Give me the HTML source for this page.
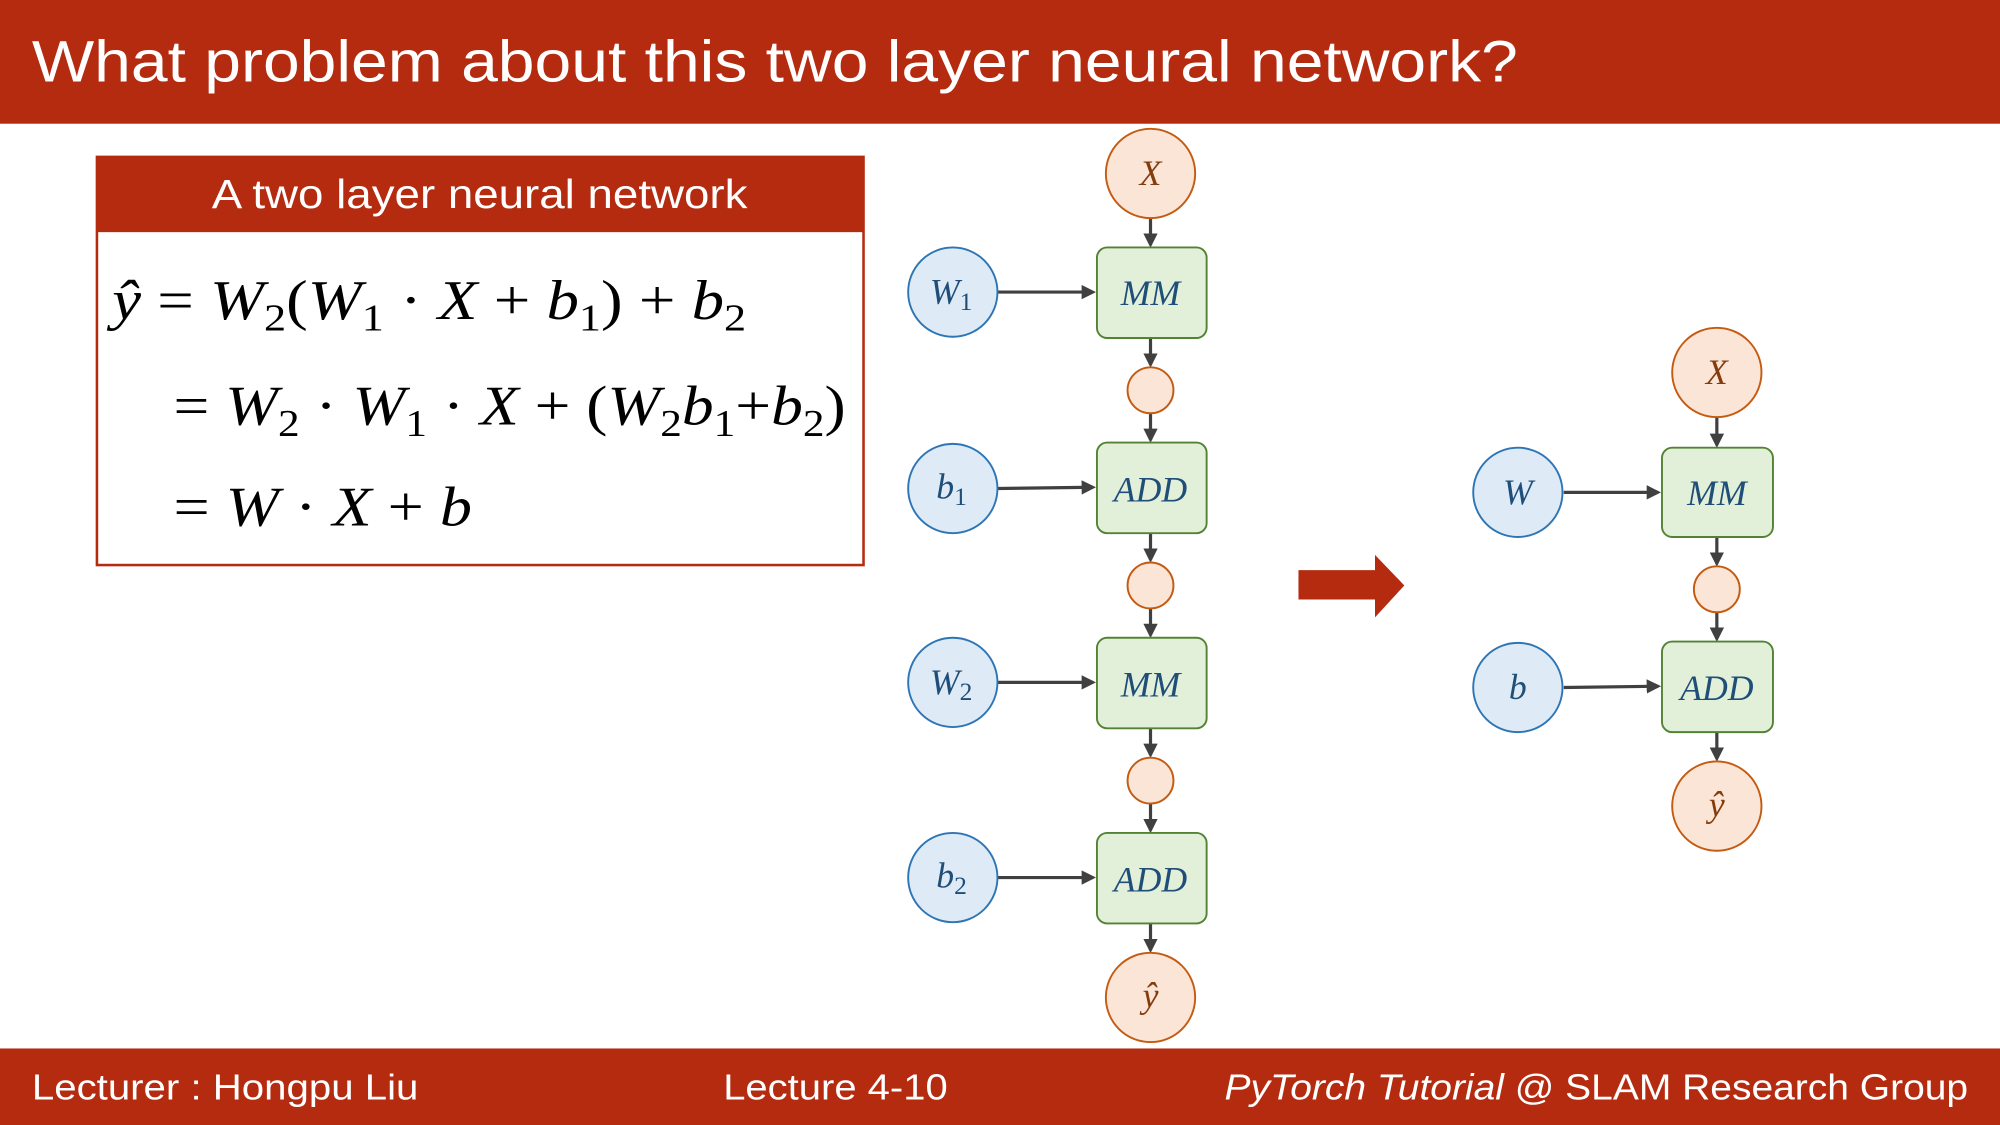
<!DOCTYPE html>
<html><head><meta charset="utf-8"><style>
html,body{margin:0;padding:0;background:#fff;}
svg{display:block;}
.s{font-family:"Liberation Sans",sans-serif;}
.m{font-family:"Liberation Serif",serif;}
.i{font-style:italic;}
.n{font-family:"Liberation Serif",serif;font-style:italic;fill:#1F4E79;font-size:28px;}
.o{fill:#FBE5D6;stroke:#C55A11;stroke-width:1.5;}
.b{fill:#DEEBF7;stroke:#2E75B6;stroke-width:1.5;}
.g{fill:#E2F0D9;stroke:#548235;stroke-width:1.5;}
.ln{stroke:#404040;stroke-width:2.5;}
</style></head><body>
<svg width="2000" height="1125" viewBox="0 0 1568 882" xmlns="http://www.w3.org/2000/svg">
<defs><marker id="ar" markerWidth="4.5" markerHeight="4.5" refX="3.6" refY="2.25" orient="auto" markerUnits="strokeWidth"><path d="M0,0 L4.5,2.25 L0,4.5 z" fill="#404040"/></marker></defs>
<rect x="0" y="0" width="1568" height="97" fill="#B52B10"/>
<text class="s" x="25" y="64" font-size="46" fill="#fff" textLength="1165" lengthAdjust="spacingAndGlyphs">What problem about this two layer neural network?</text>
<rect x="0" y="822" width="1568" height="60" fill="#B52B10"/>
<g class="s" font-size="28" fill="#fff">
<text x="25" y="862" textLength="303" lengthAdjust="spacingAndGlyphs">Lecturer : Hongpu Liu</text>
<text x="567" y="862" textLength="176" lengthAdjust="spacingAndGlyphs">Lecture 4-10</text>
<text x="960" y="862" textLength="583" lengthAdjust="spacingAndGlyphs"><tspan font-style="italic">PyTorch Tutorial</tspan> @ SLAM Research Group</text>
</g>
<rect x="76" y="123" width="601" height="320" fill="#fff" stroke="#B52B10" stroke-width="2"/>
<rect x="76" y="123" width="601" height="59" fill="#B52B10"/>
<text class="s" x="376" y="163" font-size="32" fill="#fff" text-anchor="middle" textLength="420" lengthAdjust="spacingAndGlyphs">A two layer neural network</text>
<g class="m" font-size="44" fill="#000">
<text x="88" y="250" textLength="497" lengthAdjust="spacingAndGlyphs"><tspan class="i">ŷ</tspan> = <tspan class="i">W</tspan><tspan dy="9" font-size="30">2</tspan><tspan dy="-9">(</tspan><tspan class="i">W</tspan><tspan dy="9" font-size="30">1</tspan><tspan dy="-9"> · </tspan><tspan class="i">X</tspan> + <tspan class="i">b</tspan><tspan dy="9" font-size="30">1</tspan><tspan dy="-9">) + </tspan><tspan class="i">b</tspan><tspan dy="9" font-size="30">2</tspan></text>
<text x="136" y="333" textLength="527" lengthAdjust="spacingAndGlyphs">= <tspan class="i">W</tspan><tspan dy="9" font-size="30">2</tspan><tspan dy="-9"> · </tspan><tspan class="i">W</tspan><tspan dy="9" font-size="30">1</tspan><tspan dy="-9"> · </tspan><tspan class="i">X</tspan> + (<tspan class="i">W</tspan><tspan dy="9" font-size="30">2</tspan><tspan dy="-9" class="i">b</tspan><tspan dy="9" font-size="30">1</tspan><tspan dy="-9">+</tspan><tspan class="i">b</tspan><tspan dy="9" font-size="30">2</tspan><tspan dy="-9">)</tspan></text>
<text x="136" y="412" textLength="234" lengthAdjust="spacingAndGlyphs">= <tspan class="i">W</tspan> · <tspan class="i">X</tspan> + <tspan class="i">b</tspan></text>
</g>
<g>
<line class="ln" x1="902" y1="171" x2="902" y2="192" marker-end="url(#ar)"/>
<line class="ln" x1="902" y1="265" x2="902" y2="286" marker-end="url(#ar)"/>
<line class="ln" x1="902" y1="324" x2="902" y2="345" marker-end="url(#ar)"/>
<line class="ln" x1="902" y1="418" x2="902" y2="439" marker-end="url(#ar)"/>
<line class="ln" x1="902" y1="477" x2="902" y2="498" marker-end="url(#ar)"/>
<line class="ln" x1="902" y1="571" x2="902" y2="592" marker-end="url(#ar)"/>
<line class="ln" x1="902" y1="630" x2="902" y2="651" marker-end="url(#ar)"/>
<line class="ln" x1="902" y1="724" x2="902" y2="745" marker-end="url(#ar)"/>
<line class="ln" x1="782" y1="229" x2="857" y2="229" marker-end="url(#ar)"/>
<line class="ln" x1="782" y1="383" x2="857" y2="382" marker-end="url(#ar)"/>
<line class="ln" x1="782" y1="535" x2="857" y2="535" marker-end="url(#ar)"/>
<line class="ln" x1="782" y1="688" x2="857" y2="688" marker-end="url(#ar)"/>
<circle class="o" cx="902" cy="136" r="35"/>
<rect class="g" x="860" y="194" width="86" height="71" rx="8"/>
<circle class="o" cx="902" cy="306" r="18"/>
<rect class="g" x="860" y="347" width="86" height="71" rx="8"/>
<circle class="o" cx="902" cy="459" r="18"/>
<rect class="g" x="860" y="500" width="86" height="71" rx="8"/>
<circle class="o" cx="902" cy="612" r="18"/>
<rect class="g" x="860" y="653" width="86" height="71" rx="8"/>
<circle class="o" cx="902" cy="782" r="35"/>
<circle class="b" cx="747" cy="229" r="35"/>
<circle class="b" cx="747" cy="383" r="35"/>
<circle class="b" cx="747" cy="535" r="35"/>
<circle class="b" cx="747" cy="688" r="35"/>
<text class="n" x="902" y="145" text-anchor="middle" style="fill:#843C0C">X</text>
<text class="n" x="902" y="239" text-anchor="middle">MM</text>
<text class="n" x="902" y="393" text-anchor="middle">ADD</text>
<text class="n" x="902" y="546" text-anchor="middle">MM</text>
<text class="n" x="902" y="699" text-anchor="middle">ADD</text>
<text class="n" x="902" y="790" text-anchor="middle" style="fill:#843C0C">ŷ</text>
<text class="n" x="729" y="238">W<tspan font-size="20" dy="5" font-style="normal">1</tspan></text>
<text class="n" x="734" y="391">b<tspan font-size="20" dy="5" font-style="normal">1</tspan></text>
<text class="n" x="729" y="544">W<tspan font-size="20" dy="5" font-style="normal">2</tspan></text>
<text class="n" x="734" y="696">b<tspan font-size="20" dy="5" font-style="normal">2</tspan></text>
</g>
<path d="M1018,447 L1078,447 L1078,435 L1101,459 L1078,484 L1078,470 L1018,470 Z" fill="#B52B10"/>
<g>
<line class="ln" x1="1346" y1="327" x2="1346" y2="349" marker-end="url(#ar)"/>
<line class="ln" x1="1346" y1="421" x2="1346" y2="442" marker-end="url(#ar)"/>
<line class="ln" x1="1346" y1="480" x2="1346" y2="501" marker-end="url(#ar)"/>
<line class="ln" x1="1346" y1="574" x2="1346" y2="595" marker-end="url(#ar)"/>
<line class="ln" x1="1226" y1="386" x2="1300" y2="386" marker-end="url(#ar)"/>
<line class="ln" x1="1226" y1="539" x2="1300" y2="538" marker-end="url(#ar)"/>
<circle class="o" cx="1346" cy="292" r="35"/>
<rect class="g" x="1303" y="351" width="87" height="70" rx="8"/>
<circle class="o" cx="1346" cy="462" r="18"/>
<rect class="g" x="1303" y="503" width="87" height="71" rx="8"/>
<circle class="o" cx="1346" cy="632" r="35"/>
<circle class="b" cx="1190" cy="386" r="35"/>
<circle class="b" cx="1190" cy="539" r="35"/>
<text class="n" x="1346" y="301" text-anchor="middle" style="fill:#843C0C">X</text>
<text class="n" x="1346" y="396" text-anchor="middle">MM</text>
<text class="n" x="1346" y="549" text-anchor="middle">ADD</text>
<text class="n" x="1346" y="640" text-anchor="middle" style="fill:#843C0C">ŷ</text>
<text class="n" x="1190" y="395" text-anchor="middle">W</text>
<text class="n" x="1190" y="548" text-anchor="middle">b</text>
</g>
</svg>
</body></html>
